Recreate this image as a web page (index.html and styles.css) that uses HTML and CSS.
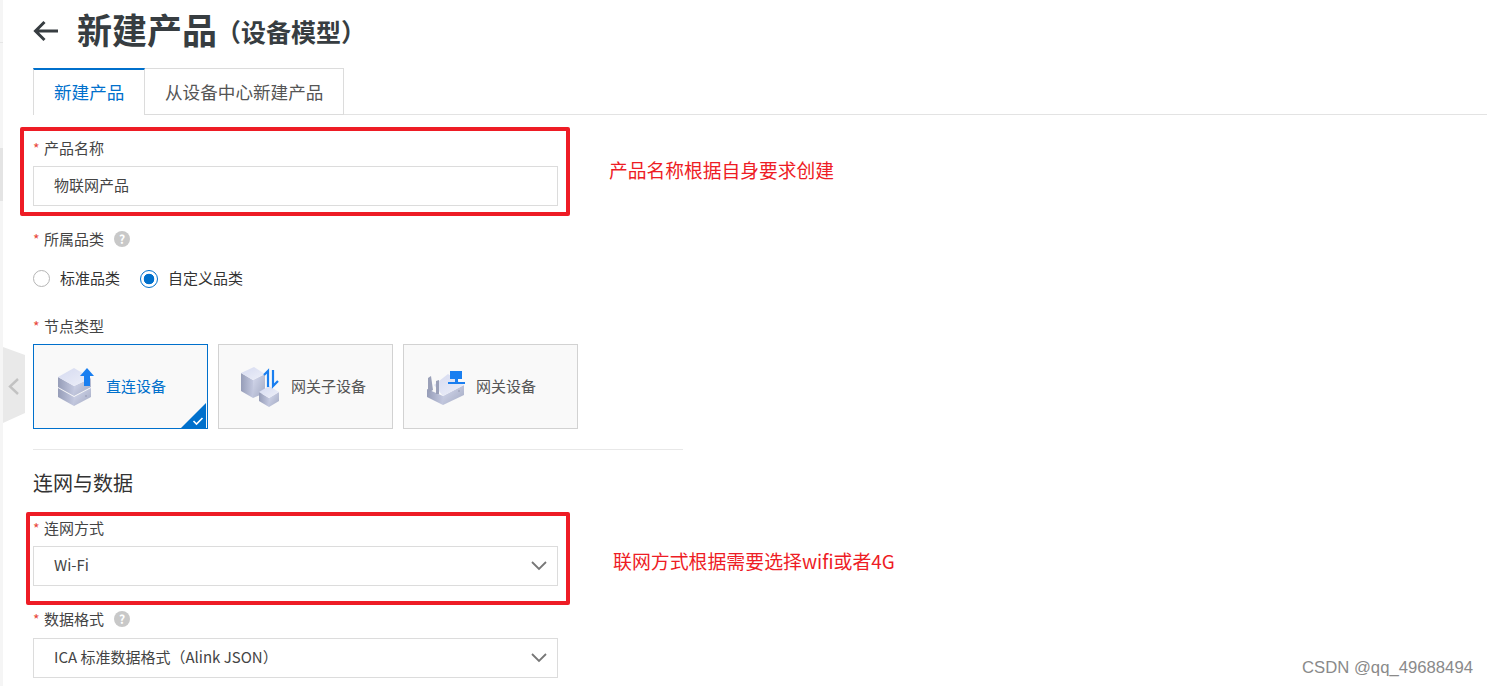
FILE: index.html
```html
<!DOCTYPE html>
<html>
<head>
    <title>新建产品</title>
    <link rel="stylesheet" href="styles.css">
</head>
<body>
    <div class="side-strip">
        <div class="strip-top"></div>
        <div class="strip-gap"></div>
        <div class="strip-dark"></div>
    </div>
    <svg class="side-handle" width="22" height="76" viewBox="0 0 22 76">
        <polygon points="0,0 22,8 22,66 0,76" fill="#e9e9e9"/>
        <polyline points="15,32 7,39.5 15,47" fill="none" stroke="#c2c2c2" stroke-width="2.4"/>
    </svg>

    <div class="page">
        <div class="page-header">
            <svg class="back-arrow" width="25" height="22" viewBox="0 0 25 22">
                <path d="M25 11H2.5M11.5 2L2.5 11L11.5 20" fill="none" stroke="#373d41" stroke-width="3"/>
            </svg>
            <h1 class="page-title">新建产品</h1>
            <span class="page-subtitle">（设备模型）</span>
        </div>

        <div class="tabs">
            <div class="tab tab-active">新建产品</div>
            <div class="tab tab-other">从设备中心新建产品</div>
            <div class="tabs-line"></div>
        </div>

        <div class="field field-first">
            <div class="field-label"><span class="star">*</span>产品名称</div>
            <div class="text-box">物联网产品</div>
        </div>

        <div class="field">
            <div class="field-label"><span class="star">*</span>所属品类<span class="help">?</span></div>
            <div class="radio-row">
                <span class="radio"></span><span class="radio-text">标准品类</span>
                <span class="radio radio-on"></span><span class="radio-text">自定义品类</span>
            </div>
        </div>

        <div class="field field-nodes">
            <div class="field-label"><span class="star">*</span>节点类型</div>
            <div class="cards">
                <div class="card card-active">
                    <svg class="card-icon" width="44" height="44" viewBox="0 0 44 44">
                        <defs>
                            <linearGradient id="sideLeft" x1="0" y1="0" x2="1" y2="0">
                                <stop offset="0" stop-color="#969db8"/>
                                <stop offset="1" stop-color="#c3c8df"/>
                            </linearGradient>
                            <linearGradient id="sideRight" x1="0" y1="0" x2="1" y2="1">
                                <stop offset="0" stop-color="#d6daee"/>
                                <stop offset="1" stop-color="#a2a9c2"/>
                            </linearGradient>
                            <linearGradient id="topFace" x1="0" y1="0" x2="1" y2="1">
                                <stop offset="0" stop-color="#d5daf0"/>
                                <stop offset="1" stop-color="#eef0f9"/>
                            </linearGradient>
                        </defs>
                        <polygon points="2,23 18,32 18,41 2,32" fill="url(#sideLeft)"/>
                        <polygon points="18,32 35,23 35,32 18,41" fill="url(#sideRight)"/>
                        <polygon points="2,12 18,21 18,31 2,22" fill="url(#sideLeft)"/>
                        <polygon points="18,21 35,13 35,22 18,31" fill="url(#sideRight)"/>
                        <polygon points="2,12 18,3 35,13 18,21" fill="url(#topFace)"/>
                        <circle cx="30" cy="31" r="0.8" fill="#8f95ad"/>
                        <polygon points="31,3 38,11 34,11 34,21 28,21 28,11 24,11" fill="#1a7ff0"/>
                    </svg>
                    <span class="card-text">直连设备</span>
                    <span class="card-corner">
                        <svg width="12" height="10" viewBox="0 0 12 10">
                            <polyline points="1.5,5 4.5,8 10.5,2" fill="none" stroke="#fff" stroke-width="1.6"/>
                        </svg>
                    </span>
                </div>
                <div class="card">
                    <svg class="card-icon" width="44" height="44" viewBox="0 0 44 44">
                        <polygon points="0,8 12,15 12,33 0,26" fill="url(#sideLeft)"/>
                        <polygon points="12,15 24,9 24,28 12,33" fill="url(#sideRight)"/>
                        <polygon points="0,8 13,2 24,9 12,15" fill="url(#topFace)"/>
                        <polygon points="18,27 28,33 28,42 18,36" fill="url(#sideLeft)"/>
                        <polygon points="28,33 38,27 38,36 28,42" fill="url(#sideRight)"/>
                        <polygon points="18,27 28,21 38,27 28,33" fill="url(#topFace)"/>
                        <path d="M27 22V6L23 10M32 5V21L37 16" fill="none" stroke="#1a7ff0" stroke-width="2.2"/>
                    </svg>
                    <span class="card-text">网关子设备</span>
                </div>
                <div class="card">
                    <svg class="card-icon" width="44" height="44" viewBox="0 0 44 44">
                        <polygon points="1,24 17,31 17,40 1,32" fill="url(#sideLeft)"/>
                        <polygon points="17,31 38,20 38,30 17,40" fill="url(#sideRight)"/>
                        <polygon points="8,20 22,9 38,20 17,31" fill="url(#topFace)"/>
                        <path d="M2 13L5 11L7 25L2 28ZM10 16L13 15V29H10Z" fill="#9aa0b8"/>
                        <circle cx="33" cy="26" r="0.8" fill="#8f95ad"/>
                        <rect x="24" y="6" width="12" height="8" fill="#1a7ff0"/>
                        <rect x="29" y="14" width="3" height="3" fill="#1a7ff0"/>
                        <rect x="22" y="17" width="17" height="2" fill="#1a7ff0"/>
                    </svg>
                    <span class="card-text">网关设备</span>
                </div>
            </div>
        </div>

        <div class="divider"></div>
        <h2 class="section-title">连网与数据</h2>

        <div class="field field-net">
            <div class="field-label"><span class="star">*</span>连网方式</div>
            <div class="text-box select-box">
                Wi-Fi
                <svg class="select-arrow" width="16" height="10" viewBox="0 0 16 10">
                    <polyline points="1,1 8,8 15,1" fill="none" stroke="#777" stroke-width="1.8"/>
                </svg>
            </div>
        </div>

        <div class="field">
            <div class="field-label label-tight"><span class="star">*</span>数据格式<span class="help">?</span></div>
            <div class="text-box select-box">
                ICA 标准数据格式（Alink JSON）
                <svg class="select-arrow" width="16" height="10" viewBox="0 0 16 10">
                    <polyline points="1,1 8,8 15,1" fill="none" stroke="#777" stroke-width="1.8"/>
                </svg>
            </div>
        </div>
    </div>

    <!-- red notes drawn on top of the screenshot -->
    <div class="mark mark-name"></div>
    <div class="mark mark-net"></div>
    <div class="note note-name">产品名称根据自身要求创建</div>
    <div class="note note-net">联网方式根据需要选择wifi或者4G</div>
    <div class="watermark">CSDN @qq_49688494</div>
</body>
</html>
```

FILE: styles.css
```css
html, body {
    height: 100%;
    overflow: hidden;
}

body {
    display: flex;
    margin: 0;
    background-color: #fff;
    color: #373d41;
    font-family: "Noto Sans CJK SC", "Noto Sans", sans-serif;
    font-size: 15px;
}

/* Sliver of the side menu at the left edge */
.side-strip {
    flex: none;
    display: flex;
    flex-direction: column;
    width: 3px;
    background-color: #f5f5f5;
}
.strip-top {
    height: 42px;
    border-bottom: 1px solid #e6e6e6;
}
.strip-gap {
    height: 105px;
}
.strip-dark {
    height: 53px;
    background-color: #e4e4e4;
}
.side-handle {
    position: absolute;
    top: 347px;
    left: 3px;
}

.page {
    flex: 1;
    padding-left: 30px;
}

.page-header {
    display: flex;
    align-items: center;
    height: 62px;
    margin-bottom: 6px;
}
.back-arrow {
    margin-right: 19px;
}
.page-title {
    margin: 0 0 5px;
    font-size: 35px;
    line-height: 50px;
    font-weight: 700;
}
.page-subtitle {
    margin-bottom: 1px;
    margin-left: -1px;
    font-size: 25px;
    font-weight: 700;
    line-height: 34px;
}

.tabs {
    display: flex;
    height: 47px;
}
.tab {
    box-sizing: border-box;
    height: 47px;
    padding: 0 20px;
    border: 1px solid #dcdcdc;
    border-left: 0;
    font-size: 17.6px;
    line-height: 45px;
    color: #555;
    white-space: nowrap;
}
.tab-active {
    width: 112px;
    padding-right: 0;
    border-top: 2px solid #0070cc;
    border-left: 1px solid #dcdcdc;
    border-bottom: 0;
    color: #0070cc;
    line-height: 43px;
}
.tab-other {
    width: 199px;
}
.tabs-line {
    flex: 1;
    height: 46px;
    border-bottom: 1px solid #e3e3e3;
}

.field {
    margin-top: 23px;
}
.field-first {
    margin-top: 23px;
}
.field-nodes {
    margin-top: 27px;
}
.field-net {
    margin-top: 21px;
}
.field-label {
    display: flex;
    align-items: center;
    height: 20px;
    margin-bottom: 8px;
    font-size: 15px;
    line-height: 20px;
    color: #444;
}
.label-tight {
    margin-bottom: 9px;
}
.star {
    width: 11px;
    color: #e8473a;
    font-size: 14px;
}
.help {
    width: 16px;
    height: 16px;
    margin-left: 10px;
    border-radius: 50%;
    background-color: #c8c8c8;
    color: #fff;
    font-size: 12px;
    font-weight: 700;
    line-height: 16px;
    text-align: center;
}

.text-box {
    position: relative;
    box-sizing: border-box;
    width: 525px;
    height: 40px;
    padding-left: 20px;
    border: 1px solid #dcdcdc;
    font-size: 15px;
    line-height: 36px;
    color: #444;
}
.select-arrow {
    position: absolute;
    top: 14px;
    right: 10px;
}

.radio-row {
    display: flex;
    align-items: center;
    height: 21px;
    margin-top: 19px;
    font-size: 15px;
    color: #333;
}
.radio {
    box-sizing: border-box;
    width: 17px;
    height: 17px;
    border: 1px solid #b5b5b5;
    border-radius: 50%;
}
.radio-on {
    width: 18px;
    height: 18px;
    border-color: #0070cc;
    background: radial-gradient(circle, #0070cc 0, #0070cc 5px, #fff 5.6px);
}
.radio-text {
    margin-left: 10px;
    margin-right: 20px;
    padding-bottom: 3px;
}

.cards {
    display: flex;
    gap: 10px;
}
.card {
    position: relative;
    box-sizing: border-box;
    display: flex;
    align-items: center;
    width: 175px;
    height: 85px;
    padding-left: 22px;
    border: 1px solid #d2d2d2;
    background-color: #f9f9f9;
    font-size: 15px;
    color: #555;
}
.card-active {
    border-color: #0070cc;
    color: #0070cc;
}
.card-icon {
    flex: none;
    margin-right: 6px;
}
.card-text {
    padding-bottom: 3px;
}
.card-corner {
    position: absolute;
    right: 1px;
    bottom: 0;
    width: 25px;
    height: 25px;
    background-color: #0070cc;
    clip-path: polygon(100% 0, 100% 100%, 0 100%);
}
.card-corner svg {
    position: absolute;
    right: 2px;
    bottom: 2px;
}

.divider {
    width: 650px;
    height: 1px;
    margin-top: 20px;
    background-color: #e8e8e8;
}
.section-title {
    margin: 19px 0 0;
    font-size: 20px;
    font-weight: 400;
    line-height: 28px;
    color: #333;
}

/* Annotations */
.mark {
    position: absolute;
    box-sizing: border-box;
    border: 4px solid #ee1c25;
    border-radius: 2px;
}
.mark-name {
    top: 127px;
    left: 20px;
    width: 550px;
    height: 89px;
}
.mark-net {
    top: 512px;
    left: 26px;
    width: 544px;
    height: 93px;
}
.note {
    position: absolute;
    color: #ee1c25;
    font-size: 18.75px;
    line-height: 26px;
    white-space: nowrap;
}
.note-name {
    top: 157px;
    left: 609px;
}
.note-net {
    top: 548px;
    left: 613px;
    font-size: 18.9px;
}
.watermark {
    position: absolute;
    top: 658px;
    left: 1302px;
    color: #8a8a8a;
    font-family: "Liberation Sans", sans-serif;
    font-size: 16.7px;
    line-height: 20px;
    white-space: nowrap;
}
```
